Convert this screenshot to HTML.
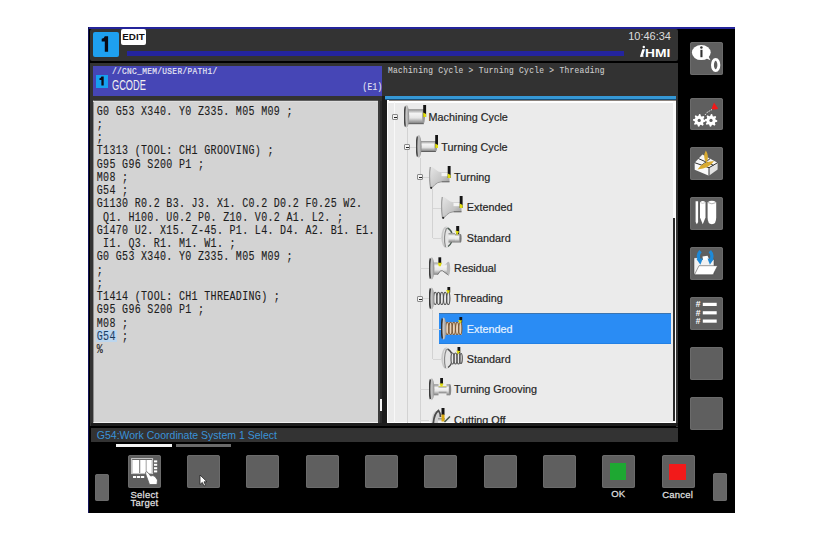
<!DOCTYPE html><html><head><meta charset="utf-8"><style>
*{margin:0;padding:0;box-sizing:border-box}
html,body{width:822px;height:540px;overflow:hidden;background:#fff;font-family:"Liberation Sans",sans-serif}
.abs{position:absolute}
#frame{position:absolute;left:88px;top:27px;width:647px;height:486px;background:#000}
.btn{position:absolute;background:#5f5f5f;border-radius:2.5px;box-shadow:inset 0 0 0 1px #6b6b6b}
.mono{font-family:"Liberation Mono",monospace}
.gl{position:absolute;left:96.8px;white-space:pre;font-family:"Liberation Mono",monospace;font-size:10px;letter-spacing:0.32px;color:#1c1c1c;transform-origin:0 0;transform:scaleY(1.27);line-height:12px;-webkit-text-stroke:0.1px #1c1c1c}
.tt{position:absolute;font-size:10.8px;color:#262626;white-space:pre;line-height:12px;-webkit-text-stroke:0.2px}
.sk{position:absolute;font-size:9.5px;letter-spacing:0.25px;color:#ddd;text-align:center;width:60px;line-height:8px;-webkit-text-stroke:0.3px #ddd}
</style></head><body>
<div id="frame"></div>
<div class="abs" style="left:88px;top:27px;width:647px;height:1.6px;background:#24249a"></div>
<div class="abs" style="left:88px;top:27px;width:1px;height:486px;background:#14145a"></div>
<div class="abs" style="left:90px;top:29px;width:588px;height:31.5px;background:#333;border-radius:2px"></div>
<div class="abs" style="left:92.5px;top:31.5px;width:26px;height:25.5px;background:#1ea0f0;border-radius:2px"></div>
<svg class="abs" style="left:0;top:0" width="120" height="60"><path d="M104.8 36.2 H108.1 V51.8 H104.8 V41.6 H101.7 V38.8 Q104.3 38.6 104.8 36.2Z" fill="#0a0a14"/></svg>
<div class="abs" style="left:121px;top:29px;width:25px;height:16px;background:#fff;border-radius:2px"></div>
<div class="abs" style="left:121px;top:29px;width:25px;text-align:center;font-size:9.8px;font-weight:bold;color:#111;line-height:16px">EDIT</div>
<div class="abs" style="left:127px;top:51.2px;width:497px;height:4.8px;background:#24249e"></div>
<div class="abs" style="left:600px;top:29px;width:71px;text-align:right;font-size:11px;color:#ddd;line-height:14px">10:46:34</div>
<svg class="abs" style="left:630px;top:40px" width="20" height="20"><circle cx="13.8" cy="7" r="1.2" fill="#fff"/><path d="M12.3 9.3 L15 9.3 L12.6 16.8 L9.9 16.8 Z M9.9 16.8 L12.6 16.8 L13.8 15 L13.8 16.2 L12.4 16.9Z" fill="#fff"/></svg>
<div class="abs" style="left:645.3px;top:48px;font-size:10.2px;font-weight:bold;color:#fff;line-height:12px;white-space:pre;transform-origin:0 0;transform:scaleX(1.36)">HMI</div>
<div class="abs" style="left:90.4px;top:63px;width:295.6px;height:362.5px;background:#333"></div>
<div class="abs" style="left:93px;top:65.5px;width:289px;height:30px;background:#4646b6"></div>
<div class="abs mono" style="left:112px;top:65.2px;font-size:7.8px;letter-spacing:0.35px;color:#e8e8f4;white-space:pre;line-height:10px;transform-origin:0 0;transform:scaleY(1.25);-webkit-text-stroke:0.15px #e8e8f4">//CNC_MEM/USER/PATH1/</div>
<div class="abs" style="left:95.5px;top:75px;width:12.5px;height:12.5px;background:#16a0f0"></div>
<svg class="abs" style="left:0;top:0" width="120" height="100"><path d="M101.4 76.6 H103.7 V85.6 H101.4 V79.9 H99.5 V78.2 Q101.1 78.1 101.4 76.6Z" fill="#0a0a14"/></svg>
<div class="abs" style="left:112px;top:77px;font-size:13.4px;color:#f0f0f0;white-space:pre;line-height:16px;transform-origin:0 0;transform:scale(0.69,1.08)">GCODE</div>
<div class="abs mono" style="left:362.5px;top:80.5px;font-size:7.8px;letter-spacing:0.3px;color:#e4e4f4;white-space:pre;line-height:10px;transform-origin:0 0;transform:scaleY(1.35);-webkit-text-stroke:0.1px #e4e4f4">(E1)</div>
<div class="abs" style="left:93px;top:99.8px;width:285px;height:323.2px;background:#d3d3d3;border-top:1.6px solid #5e5e5e;border-left:1.2px solid #8e8e8e;border-bottom:1px solid #f0f0f0"></div>
<div class="abs" style="left:93px;top:101.4px;width:285px;height:1px;background:#dedede"></div>
<div class="abs" style="left:96px;top:329.5px;width:21px;height:12.5px;background:#bcd6ee"></div>
<div class="gl" style="top:104.50px">G0 G53 X340. Y0 Z335. M05 M09 ;</div>
<div class="gl" style="top:117.76px">;</div>
<div class="gl" style="top:131.02px">;</div>
<div class="gl" style="top:144.28px">T1313 (TOOL: CH1 GROOVING) ;</div>
<div class="gl" style="top:157.54px">G95 G96 S200 P1 ;</div>
<div class="gl" style="top:170.80px">M08 ;</div>
<div class="gl" style="top:184.06px">G54 ;</div>
<div class="gl" style="top:197.32px">G1130 R0.2 B3. J3. X1. C0.2 D0.2 F0.25 W2.</div>
<div class="gl" style="top:210.58px"> Q1. H100. U0.2 P0. Z10. V0.2 A1. L2. ;</div>
<div class="gl" style="top:223.84px">G1470 U2. X15. Z-45. P1. L4. D4. A2. B1. E1.</div>
<div class="gl" style="top:237.10px"> I1. Q3. R1. M1. W1. ;</div>
<div class="gl" style="top:250.36px">G0 G53 X340. Y0 Z335. M05 M09 ;</div>
<div class="gl" style="top:263.62px">;</div>
<div class="gl" style="top:276.88px">;</div>
<div class="gl" style="top:290.14px">T1414 (TOOL: CH1 THREADING) ;</div>
<div class="gl" style="top:303.40px">G95 G96 S200 P1 ;</div>
<div class="gl" style="top:316.66px">M08 ;</div>
<div class="gl" style="top:329.92px"><span style="color:#1d4a78">G54</span> ;</div>
<div class="gl" style="top:343.18px">%</div>
<div class="abs" style="left:378px;top:101px;width:2px;height:322px;background:#3a3a3a"></div>
<div class="abs" style="left:380px;top:101px;width:2.2px;height:322px;background:#2a2a2a"></div>
<div class="abs" style="left:382.2px;top:96px;width:5px;height:327px;background:#1c1c1c"></div>
<div class="abs" style="left:379.8px;top:398.5px;width:2.4px;height:12.5px;background:#f4f4f4"></div>
<div class="abs" style="left:382px;top:63px;width:296px;height:33px;background:#323232"></div>
<div class="abs mono" style="left:387.9px;top:64.4px;font-size:7.9px;letter-spacing:0.31px;color:#cccccc;white-space:pre;line-height:10px;transform-origin:0 0;transform:scaleY(1.22);-webkit-text-stroke:0.1px #ccc">Machining Cycle &gt; Turning Cycle &gt; Threading</div>
<div class="abs" style="left:385px;top:95.8px;width:291px;height:3.2px;background:#3598d6"></div>
<div class="abs" style="left:385px;top:99px;width:291px;height:1px;background:#154e78"></div>
<div class="abs" style="left:387px;top:100px;width:289px;height:323px;background:#ebebeb;border-left:1.5px solid #fff;border-top:3px solid #fff;border-bottom:1px solid #fff"></div>
<div class="abs" style="left:388.5px;top:100px;width:287.5px;height:1.3px;background:#8c847e"></div>
<div class="abs" style="left:673px;top:101px;width:3px;height:322px;background:#fafafa"></div>
<div class="abs" style="left:676px;top:96px;width:2px;height:331px;background:#333"></div>
<div class="abs" style="left:672.9px;top:218px;width:1.8px;height:202.5px;background:#2a2a2a"></div>
<svg width="0" height="0" style="position:absolute"><defs>
<linearGradient id="gv" x1="0" y1="0" x2="0" y2="1"><stop offset="0" stop-color="#8a8a8a"/><stop offset="0.3" stop-color="#f4f4f4"/><stop offset="0.6" stop-color="#e6e6e6"/><stop offset="1" stop-color="#7a7a7a"/></linearGradient>
<linearGradient id="gf" x1="0" y1="0" x2="1" y2="0"><stop offset="0" stop-color="#5a5a5a"/><stop offset="0.5" stop-color="#c8c8c8"/><stop offset="1" stop-color="#8a8a8a"/></linearGradient>
<linearGradient id="gc" x1="0" y1="0" x2="1" y2="1"><stop offset="0" stop-color="#e8e8e8"/><stop offset="0.6" stop-color="#c4c4c4"/><stop offset="1" stop-color="#8c8c8c"/></linearGradient>
<symbol id="tool" viewBox="0 0 24 24"><rect x="19.2" y="0" width="2.9" height="12" fill="#151515"/><path d="M19.2 7.5 L22.1 9 L22.1 12 L19.2 12Z" fill="#e0dc10"/></symbol>
<symbol id="i_cyl" viewBox="0 0 24 24">
<rect x="4" y="4.2" width="15.8" height="14.5" fill="url(#gv)"/><path d="M4 18.7 H19.8" stroke="#555" stroke-width="0.9"/>
<ellipse cx="19.6" cy="11.4" rx="1.4" ry="7.2" fill="#9a9a9a"/>
<ellipse cx="2.6" cy="11.4" rx="2.6" ry="11.3" fill="url(#gf)"/><path d="M1.2 1.5 Q-0.6 11.4 1.2 21.5" stroke="#444" stroke-width="1.3" fill="none"/>
<use href="#tool" x="0" y="0" width="24" height="24"/></symbol>
<symbol id="i_cyl2" viewBox="0 0 24 24">
<rect x="4.5" y="6" width="15.5" height="10.5" fill="url(#gv)"/><path d="M4.5 16.5 H20" stroke="#555" stroke-width="0.9"/>
<ellipse cx="19.8" cy="11.25" rx="1.3" ry="5.2" fill="#9a9a9a"/>
<ellipse cx="2.8" cy="11.4" rx="2.8" ry="11.3" fill="url(#gf)"/><path d="M1.3 1.5 Q-0.6 11.4 1.3 21.5" stroke="#444" stroke-width="1.3" fill="none"/>
<rect x="19.2" y="0" width="2.8" height="13" fill="#151515"/><path d="M19.2 8.5 L22 10 L22 13 L19.2 13Z" fill="#e0dc10"/></symbol>
<symbol id="i_cone" viewBox="0 0 24 24">
<path d="M1.2 0.5 Q4 1.2 6.5 3.6 Q9 6.2 12.5 6.2 L20.5 6.2 L20.5 15.8 L12.5 15.8 Q8.5 16 5.8 18.8 Q3.5 21.5 1.8 22.4 Q-0.6 11.4 1.2 0.5Z" fill="url(#gc)"/>
<path d="M12.5 15.8 L20.5 15.8" stroke="#5a5a5a" stroke-width="1"/><path d="M1.8 22.4 Q3.5 21.5 5.8 18.8 Q8.5 16 12.5 15.8" stroke="#8a8a8a" stroke-width="0.8" fill="none"/>
<rect x="12.5" y="7" width="8" height="3.2" fill="#fafafa" opacity="0.85"/>
<path d="M1.3 1 Q-0.4 11.4 1.6 22" stroke="#a0a0a0" stroke-width="1.3" fill="none"/><circle cx="2.2" cy="21.8" r="1.1" fill="#2a2a2a"/>
<use href="#tool" x="-0.5" y="0" width="24" height="24"/></symbol>
<symbol id="i_std" viewBox="0 0 24 24">
<ellipse cx="5.2" cy="11.3" rx="4.9" ry="10.8" fill="#c8c8c8"/><ellipse cx="6" cy="11.3" rx="4" ry="10.3" fill="#e4e4e4"/>
<path d="M4.5 21 Q2 11 5.5 2" stroke="#8a8a8a" stroke-width="1.2" fill="none"/>
<path d="M6.5 2 Q11 4 11.5 11 Q11 18 7 20.5" stroke="#4a5a50" stroke-width="1.4" fill="none"/>
<rect x="7.5" y="7" width="6.5" height="9.5" fill="url(#gv)"/><rect x="14" y="8" width="5.5" height="8.5" fill="url(#gv)"/>
<ellipse cx="19.5" cy="12.3" rx="1.1" ry="4.2" fill="#7a7a7a"/>
<rect x="15.2" y="0" width="3" height="8" fill="#151515"/><path d="M14.2 4.5 L18.2 5.5 L16 9.5 Z" fill="#e0dc10"/></symbol>
<symbol id="i_res" viewBox="0 0 24 24">
<path d="M4 5.5 L8.5 5.5 L11.5 9.5 L13.5 9.5 L19.5 4.8 L19.5 18.2 L13.5 13.8 L11.5 13.8 L8.5 17.8 L4 17.8Z" fill="url(#gv)"/>
<path d="M8.5 17.8 L11.5 13.8 L13.5 13.8 L19.5 18.2" stroke="#666" stroke-width="0.8" fill="none"/>
<ellipse cx="19.5" cy="11.5" rx="1.7" ry="6.7" fill="#b8b8b8"/>
<ellipse cx="2.7" cy="11.4" rx="2.7" ry="11.2" fill="url(#gf)"/><path d="M1.3 1.5 Q-0.6 11.4 1.3 21.5" stroke="#3a3a3a" stroke-width="1.4" fill="none"/>
<rect x="9.4" y="0.3" width="2.8" height="6.5" fill="#151515"/><path d="M8.8 5.8 L12.8 5.8 L11.8 9.3 L9.8 9.3Z" fill="#e0dc10"/></symbol>
<symbol id="i_thr" viewBox="0 0 24 24">
<rect x="4" y="5.2" width="17" height="12.4" fill="#e8e8e8"/>
<g fill="none" stroke="#505050" stroke-width="1.1"><ellipse cx="6.2" cy="11.4" rx="1.6" ry="6.1"/><ellipse cx="9.5" cy="11.4" rx="1.6" ry="6.1"/><ellipse cx="12.8" cy="11.4" rx="1.6" ry="6.1"/><ellipse cx="16.1" cy="11.4" rx="1.6" ry="6.1"/><ellipse cx="19.3" cy="11.4" rx="1.6" ry="6.1"/></g>
<ellipse cx="2.6" cy="11.4" rx="2.6" ry="11" fill="url(#gf)"/><path d="M1.3 1.5 Q-0.5 11.4 1.3 21.5" stroke="#333" stroke-width="1.4" fill="none"/>
<rect x="18.4" y="0" width="2.8" height="5.5" fill="#151515"/><path d="M17 3 L21.2 3.5 L19 7Z" fill="#e0dc10"/></symbol>
<symbol id="i_thr_sel" viewBox="0 0 24 24">
<rect x="4" y="5.2" width="17" height="12.4" fill="#e8d2b8"/>
<g fill="none" stroke="#7a5a3a" stroke-width="1.1"><ellipse cx="6.2" cy="11.4" rx="1.6" ry="6.1"/><ellipse cx="9.5" cy="11.4" rx="1.6" ry="6.1"/><ellipse cx="12.8" cy="11.4" rx="1.6" ry="6.1"/><ellipse cx="16.1" cy="11.4" rx="1.6" ry="6.1"/><ellipse cx="19.3" cy="11.4" rx="1.6" ry="6.1"/></g>
<ellipse cx="2.6" cy="11.4" rx="2.6" ry="11" fill="url(#gf)"/><path d="M1.3 1.5 Q-0.5 11.4 1.3 21.5" stroke="#333" stroke-width="1.4" fill="none"/>
<rect x="18.4" y="0" width="2.8" height="5.5" fill="#151515"/><path d="M17 3 L21.2 3.5 L19 7Z" fill="#e0dc10"/></symbol>
<symbol id="i_thrs" viewBox="0 0 24 24">
<ellipse cx="5.2" cy="11.3" rx="4.9" ry="10.8" fill="#c8c8c8"/><ellipse cx="6" cy="11.3" rx="4" ry="10.3" fill="#e4e4e4"/>
<path d="M4.5 21 Q2 11 5.5 2" stroke="#8a8a8a" stroke-width="1.2" fill="none"/>
<path d="M6.5 2 Q11 4 11.5 11 Q11 18 7 20.5" stroke="#4a4a4a" stroke-width="1.4" fill="none"/>
<rect x="10" y="6" width="10" height="11" fill="#e8e8e8"/>
<g fill="none" stroke="#505050" stroke-width="1.1"><ellipse cx="11.5" cy="11.5" rx="1.5" ry="5.5"/><ellipse cx="14.5" cy="11.5" rx="1.5" ry="5.5"/><ellipse cx="17.5" cy="11.5" rx="1.5" ry="5.5"/><ellipse cx="20" cy="11.5" rx="1.3" ry="5"/></g>
<rect x="16.5" y="0" width="2.8" height="6" fill="#151515"/><path d="M15.2 3.5 L19.3 4 L17 7.5Z" fill="#e0dc10"/></symbol>
<symbol id="i_grv" viewBox="0 0 24 24">
<rect x="4.5" y="6.3" width="5" height="11" fill="url(#gv)"/>
<rect x="9.5" y="8.5" width="8.5" height="6.8" fill="url(#gv)"/><path d="M9.5 8.5 L18 8.5" stroke="#e8e010" stroke-width="0.6" opacity="0.7"/>
<rect x="17.5" y="6.3" width="3.5" height="11" fill="url(#gv)"/><ellipse cx="21" cy="11.8" rx="1.2" ry="5.5" fill="#8a8a8a"/>
<ellipse cx="2.7" cy="11.2" rx="2.7" ry="11" fill="url(#gf)"/><path d="M1.3 1.5 Q-0.6 11.2 1.3 21" stroke="#3a3a3a" stroke-width="1.4" fill="none"/>
<rect x="11.2" y="0" width="2.8" height="5.8" fill="#151515"/><path d="M10.5 5.6 L14.6 5.6 L13.2 8.5 L11.8 8.5Z" fill="#e0dc10"/></symbol>
<symbol id="i_cut" viewBox="0 0 24 24">
<ellipse cx="7.5" cy="14" rx="5" ry="11" fill="#d0d0d0"/><path d="M4 22 Q4 6 9.5 2.5 Q11.5 5 11.5 9" stroke="#4a4a4a" stroke-width="1.8" fill="none"/>
<rect x="9" y="10" width="7" height="12" fill="url(#gv)"/>
<rect x="12.5" y="0" width="3" height="7" fill="#151515"/><rect x="12.5" y="6.5" width="3" height="7" fill="#d8a810"/><path d="M15.5 14 L21 8.5" stroke="#4a5a4a" stroke-width="1.6"/></symbol>
</defs></svg>
<div class="abs" style="left:388px;top:101.5px;width:284.9px;height:321px;overflow:hidden">
<div class="abs" style="left:50.60px;top:211.50px;width:232.40px;height:30.5px;background:#2a8cf4;border-top:1px solid #3a74b0;border-bottom:1px solid #2280e4"></div>
<div class="abs" style="left:5.50px;top:0;width:1px;height:322px;background:#f8f8f8"></div>
<div class="abs" style="left:19.00px;top:26.50px;width:1px;height:295.00px;border-left:1px solid #d2d2d2"></div>
<div class="abs" style="left:31.50px;top:56.50px;width:1px;height:265.00px;border-left:1px solid #d2d2d2"></div>
<div class="abs" style="left:44.00px;top:87.50px;width:1px;height:48.90px;border-left:1px solid #d2d2d2"></div>
<div class="abs" style="left:44.00px;top:208.50px;width:1px;height:49.10px;border-left:1px solid #d2d2d2"></div>
<div class="abs" style="left:4.00px;top:12.50px;width:6px;height:6px;border:1px solid #8a8a8a;background:#f4f4f4;border-radius:1px"></div>
<div class="abs" style="left:5.50px;top:15.00px;width:3px;height:1px;background:#222"></div>
<svg class="abs" style="left:15.50px;top:3.50px" width="24" height="24" viewBox="0 0 24 24"><use href="#i_cyl"/></svg>
<div class="tt" style="left:40.60px;top:9.00px;color:#262626">Machining Cycle</div>
<div class="abs" style="left:19.50px;top:45.50px;width:8.50px;height:1px;border-top:1px solid #d6d6d6"></div>
<div class="abs" style="left:16.00px;top:42.50px;width:6px;height:6px;border:1px solid #8a8a8a;background:#f4f4f4;border-radius:1px"></div>
<div class="abs" style="left:17.50px;top:45.00px;width:3px;height:1px;background:#222"></div>
<svg class="abs" style="left:28.00px;top:33.80px" width="24" height="24" viewBox="0 0 24 24"><use href="#i_cyl2"/></svg>
<div class="tt" style="left:53.35px;top:39.30px;color:#262626">Turning Cycle</div>
<div class="abs" style="left:32.00px;top:75.50px;width:8.50px;height:1px;border-top:1px solid #d6d6d6"></div>
<div class="abs" style="left:29.00px;top:72.50px;width:6px;height:6px;border:1px solid #8a8a8a;background:#f4f4f4;border-radius:1px"></div>
<div class="abs" style="left:30.50px;top:75.00px;width:3px;height:1px;background:#222"></div>
<svg class="abs" style="left:40.50px;top:64.10px" width="24" height="24" viewBox="0 0 24 24"><use href="#i_cone"/></svg>
<div class="tt" style="left:66.10px;top:69.60px;color:#262626">Turning</div>
<div class="abs" style="left:44.50px;top:106.50px;width:8.50px;height:1px;border-top:1px solid #d6d6d6"></div>
<svg class="abs" style="left:53.00px;top:94.40px" width="24" height="24" viewBox="0 0 24 24"><use href="#i_cone"/></svg>
<div class="tt" style="left:78.85px;top:99.90px;color:#262626">Extended</div>
<div class="abs" style="left:44.50px;top:136.50px;width:8.50px;height:1px;border-top:1px solid #d6d6d6"></div>
<svg class="abs" style="left:53.00px;top:124.70px" width="24" height="24" viewBox="0 0 24 24"><use href="#i_std"/></svg>
<div class="tt" style="left:78.85px;top:130.20px;color:#262626">Standard</div>
<div class="abs" style="left:32.00px;top:166.50px;width:8.50px;height:1px;border-top:1px solid #d6d6d6"></div>
<svg class="abs" style="left:40.50px;top:155.00px" width="24" height="24" viewBox="0 0 24 24"><use href="#i_res"/></svg>
<div class="tt" style="left:66.10px;top:160.50px;color:#262626">Residual</div>
<div class="abs" style="left:32.00px;top:196.50px;width:8.50px;height:1px;border-top:1px solid #d6d6d6"></div>
<div class="abs" style="left:29.00px;top:194.50px;width:6px;height:6px;border:1px solid #8a8a8a;background:#f4f4f4;border-radius:1px"></div>
<div class="abs" style="left:30.50px;top:197.00px;width:3px;height:1px;background:#222"></div>
<svg class="abs" style="left:40.50px;top:185.30px" width="24" height="24" viewBox="0 0 24 24"><use href="#i_thr"/></svg>
<div class="tt" style="left:66.10px;top:190.80px;color:#262626">Threading</div>
<div class="abs" style="left:44.50px;top:227.50px;width:8.50px;height:1px;border-top:1px solid #d6d6d6"></div>
<svg class="abs" style="left:53.00px;top:215.60px" width="24" height="24" viewBox="0 0 24 24"><use href="#i_thr_sel"/></svg>
<div class="tt" style="left:78.85px;top:221.10px;color:#e6f2ff">Extended</div>
<div class="abs" style="left:44.50px;top:257.50px;width:8.50px;height:1px;border-top:1px solid #d6d6d6"></div>
<svg class="abs" style="left:53.00px;top:245.90px" width="24" height="24" viewBox="0 0 24 24"><use href="#i_thrs"/></svg>
<div class="tt" style="left:78.85px;top:251.40px;color:#262626">Standard</div>
<div class="abs" style="left:32.00px;top:287.50px;width:8.50px;height:1px;border-top:1px solid #d6d6d6"></div>
<svg class="abs" style="left:40.50px;top:276.20px" width="24" height="24" viewBox="0 0 24 24"><use href="#i_grv"/></svg>
<div class="tt" style="left:66.10px;top:281.70px;color:#262626">Turning Grooving</div>
<div class="abs" style="left:32.00px;top:318.50px;width:8.50px;height:1px;border-top:1px solid #d6d6d6"></div>
<svg class="abs" style="left:40.50px;top:306.50px" width="24" height="24" viewBox="0 0 24 24"><use href="#i_cut"/></svg>
<div class="tt" style="left:66.10px;top:312.00px;color:#262626">Cutting Off</div>
</div>
<div class="abs" style="left:91px;top:423px;width:587px;height:2.5px;background:#1e1e1e"></div>
<div class="abs" style="left:90.5px;top:427.5px;width:587.5px;height:14.5px;background:#333"></div>
<div class="abs" style="left:96.8px;top:428px;font-size:10.5px;color:#3a92d8;white-space:pre;line-height:14px">G54:Work Coordinate System 1 Select</div>
<div class="abs" style="left:116px;top:444.2px;width:56px;height:3px;background:#f4f4f4"></div>
<div class="abs" style="left:175.7px;top:444.2px;width:55.3px;height:3px;background:#6a6a6a"></div>
<div class="btn" style="left:127.80px;top:455px;width:32.8px;height:32.5px"></div>
<div class="btn" style="left:187.13px;top:455px;width:32.8px;height:32.5px"></div>
<div class="btn" style="left:246.46px;top:455px;width:32.8px;height:32.5px"></div>
<div class="btn" style="left:305.79px;top:455px;width:32.8px;height:32.5px"></div>
<div class="btn" style="left:365.12px;top:455px;width:32.8px;height:32.5px"></div>
<div class="btn" style="left:424.45px;top:455px;width:32.8px;height:32.5px"></div>
<div class="btn" style="left:483.78px;top:455px;width:32.8px;height:32.5px"></div>
<div class="btn" style="left:543.11px;top:455px;width:32.8px;height:32.5px"></div>
<div class="btn" style="left:602.44px;top:455px;width:32.8px;height:32.5px"></div>
<div class="btn" style="left:661.77px;top:455px;width:32.8px;height:32.5px"></div>
<svg class="abs" style="left:127.80px;top:455.00px;overflow:visible" width="33" height="33" viewBox="0 0 33 33"><rect x="3.6" y="3.6" width="21" height="15" fill="none" stroke="#cfcfcf" stroke-width="1"/><rect x="4.3" y="5" width="7" height="13" fill="#fff"/><rect x="12.2" y="5" width="5.6" height="13" fill="#fff"/><rect x="18.4" y="5" width="5.4" height="13" fill="#fff"/><g fill="#fff"><rect x="26" y="5.4" width="3.2" height="2"/><rect x="26" y="8.8" width="3.2" height="2"/><rect x="26" y="12.2" width="3.2" height="2"/><rect x="26" y="15.4" width="3.2" height="2"/><rect x="5" y="21" width="3.2" height="2"/><rect x="9" y="21" width="3.2" height="2"/><rect x="13" y="21" width="3.2" height="2"/></g><path d="M17.5 17.5 Q18.5 16 20 17.6 L22.6 21 Q25 19.8 27 21.5 L29.5 25 L29 29.5 L21.5 29.5 L19.5 24 L18 20Z" fill="#fff" stroke="#5c5c5c" stroke-width="0.8"/></svg>
<svg class="abs" style="left:198.50px;top:473.50px;overflow:visible" width="8" height="13" viewBox="0 0 8 13"><path d="M1 1 L1 10.5 L3.3 8.4 L5 12 L6.6 11.3 L5 7.8 L8 7.8Z" fill="#fff" stroke="#222" stroke-width="0.8"/></svg>
<div class="sk" style="left:114.4px;top:490.9px">Select<br>Target</div>
<div class="sk" style="left:588.3px;top:490.3px">OK</div>
<div class="sk" style="left:647.7px;top:491px">Cancel</div>
<div class="abs" style="left:609.7px;top:463.3px;width:16.6px;height:16.6px;background:#1ea832"></div>
<div class="abs" style="left:669px;top:463.6px;width:17px;height:16.4px;background:#f21a1a"></div>
<div class="btn" style="left:95px;top:474px;width:14px;height:27px;background:#666"></div>
<div class="btn" style="left:713px;top:473.3px;width:14px;height:27.5px;background:#666"></div>
<div class="btn" style="left:690px;top:42.0px;width:32.6px;height:32.5px"></div>
<div class="btn" style="left:690px;top:97.5px;width:32.6px;height:32.5px"></div>
<div class="btn" style="left:690px;top:147.3px;width:32.6px;height:32.5px"></div>
<div class="btn" style="left:690px;top:197.3px;width:32.6px;height:32.5px"></div>
<div class="btn" style="left:690px;top:247.3px;width:32.6px;height:32.5px"></div>
<div class="btn" style="left:690px;top:297.0px;width:32.6px;height:32.5px"></div>
<div class="btn" style="left:690px;top:347.0px;width:32.6px;height:32.5px"></div>
<div class="btn" style="left:690px;top:397.0px;width:32.6px;height:32.5px"></div>
<svg class="abs" style="left:690.00px;top:42.00px;overflow:visible" width="33" height="33" viewBox="0 0 33 33"><ellipse cx="11.3" cy="10.6" rx="9.4" ry="7.5" fill="#fff"/><path d="M13 15 L20.5 18.3 L17.2 12Z" fill="#fff"/><circle cx="11.4" cy="5.6" r="1.25" fill="#333"/><rect x="10.4" y="7.8" width="2.1" height="7.4" fill="#333"/><ellipse cx="25.65" cy="23" rx="3.2" ry="5.6" fill="none" stroke="#fff" stroke-width="2.9"/></svg>
<svg class="abs" style="left:690.00px;top:97.50px;overflow:visible" width="33" height="33" viewBox="0 0 33 33"><polygon points="9.20,16.10 10.43,16.22 10.96,18.15 11.76,18.58 13.65,17.95 14.44,18.90 13.45,20.64 13.71,21.50 15.50,22.40 15.38,23.63 13.45,24.16 13.02,24.96 13.65,26.85 12.70,27.64 10.96,26.65 10.10,26.91 9.20,28.70 7.97,28.58 7.44,26.65 6.64,26.22 4.75,26.85 3.96,25.90 4.95,24.16 4.69,23.30 2.90,22.40 3.02,21.17 4.95,20.64 5.38,19.84 4.75,17.95 5.70,17.16 7.44,18.15 8.30,17.89" fill="#fff"/><circle cx="9.20" cy="22.40" r="1.6" fill="#5c5c5c"/><polygon points="21.00,16.10 22.23,16.22 22.76,18.15 23.56,18.58 25.45,17.95 26.24,18.90 25.25,20.64 25.51,21.50 27.30,22.40 27.18,23.63 25.25,24.16 24.82,24.96 25.45,26.85 24.50,27.64 22.76,26.65 21.90,26.91 21.00,28.70 19.77,28.58 19.24,26.65 18.44,26.22 16.55,26.85 15.76,25.90 16.75,24.16 16.49,23.30 14.70,22.40 14.82,21.17 16.75,20.64 17.18,19.84 16.55,17.95 17.50,17.16 19.24,18.15 20.10,17.89" fill="#fff"/><circle cx="21.00" cy="22.40" r="1.6" fill="#5c5c5c"/><path d="M24 4.5 Q26.5 8.5 28.2 10.5 Q25.5 12.2 21.5 11 Z" fill="#f21818"/><path d="M22 11.5 L17 14.5 L15 17" stroke="#e6e6e6" stroke-width="1" stroke-dasharray="1.5 1" fill="none"/></svg>
<svg class="abs" style="left:690.00px;top:147.30px;overflow:visible" width="33" height="33" viewBox="0 0 33 33"><path d="M4.7 15.7 L12.4 7.6 L27.6 15.7 L19 20.7Z" fill="#f6f6f6"/><path d="M4.7 15.7 L19 20.7 L19 28.7 L4.7 22.8Z" fill="#fafafa"/><path d="M19 20.7 L27.6 15.7 L27.6 22.5 L19 28.7Z" fill="#e2e2e2"/><path d="M4.7 15.7 L19 20.7 L27.6 15.7 M19 20.7 L19 28.7 M8.5 11.6 L23.3 18.2 M20 11.7 L11.8 18.2" stroke="#222" stroke-width="0.9" fill="none"/><path d="M15.8 3.6 Q19.8 9 16.5 16.5 Q12.3 10 15.8 3.6Z" fill="#d8aa30"/><path d="M7.5 22.5 Q12.5 14.5 24 14 Q19.5 21.5 7.5 22.5Z" fill="#d8aa30"/></svg>
<svg class="abs" style="left:690.00px;top:197.30px;overflow:visible" width="33" height="33" viewBox="0 0 33 33"><path d="M5.6 4.2 H8.1 V25 L6.85 27.2 L5.6 25Z" fill="#fff"/><path d="M10 5.2 Q12.75 3 15.5 5.2 L15.5 20.5 L12.75 27.2 L10 20.5Z" fill="#fff"/><path d="M17.6 5.2 Q21.9 2.4 26.2 5.2 L26.2 20.5 Q26.2 27.2 21.9 27.2 Q17.6 27.2 17.6 20.5Z" fill="#fff"/><path d="M18 5.6 Q21.9 8 25.8 5.6" stroke="#9a9a9a" stroke-width="0.8" fill="none"/><path d="M10.3 5.6 Q12.75 7.2 15.2 5.6" stroke="#aaa" stroke-width="0.6" fill="none"/></svg>
<svg class="abs" style="left:690.00px;top:247.30px;overflow:visible" width="33" height="33" viewBox="0 0 33 33"><path d="M4 10.7 L9 10.7 L11 12.5 L24 12.5 L24 27.3 L4 27.3Z" fill="#f2f2f2" stroke="#3a3a3a" stroke-width="0.5"/><path d="M12.5 9.5 L17.5 8.8 L19.5 13 L13 13Z" fill="#fff"/><path d="M4.5 27.7 L9 18.7 L27.6 18.7 L23 27.7Z" fill="#fff" stroke="#3a3a3a" stroke-width="0.5"/><path d="M10.5 4.2 Q7 8 9.3 13" stroke="#1e8ad8" stroke-width="3.2" fill="none"/><path d="M6.5 12 L12.8 11.6 L10.4 17.8Z" fill="#1e8ad8"/><path d="M19.8 4.2 Q23.3 8 21 13" stroke="#1e8ad8" stroke-width="3.2" fill="none"/><path d="M17.5 11.6 L23.8 12 L19.9 17.8Z" fill="#1e8ad8"/></svg>
<svg class="abs" style="left:690.00px;top:297.00px;overflow:visible" width="33" height="33" viewBox="0 0 33 33"><rect x="12.8" y="5.8" width="13.9" height="3.2" fill="#fff"/><text x="5.8" y="10.4" font-family="Liberation Sans" font-size="8.5" font-weight="bold" fill="#fff">#</text><rect x="12.8" y="14.2" width="13.9" height="3.2" fill="#fff"/><text x="5.8" y="18.8" font-family="Liberation Sans" font-size="8.5" font-weight="bold" fill="#fff">#</text><rect x="12.8" y="22.5" width="13.9" height="3.2" fill="#fff"/><text x="5.8" y="27.1" font-family="Liberation Sans" font-size="8.5" font-weight="bold" fill="#fff">#</text></svg>
</body></html>
